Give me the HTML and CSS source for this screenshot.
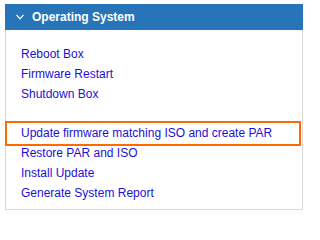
FILE: index.html
```html
<!DOCTYPE html>
<html>
<head>
<meta charset="utf-8">
<link rel="stylesheet" href="styles.css">
</head>
<body>
<div class="panel">
  <div class="panel-header">
    <svg class="chevron" width="8" height="6" viewBox="0 0 8 6"><polyline points="0.5,0.8 4,4.8 7.5,0.8" fill="none" stroke="#fff" stroke-width="1.2"/></svg>
    <span class="title">Operating System</span>
  </div>
  <div class="panel-body">
    <ul class="group">
      <li><a class="link" href="#">Reboot Box</a></li>
      <li><a class="link" href="#">Firmware Restart</a></li>
      <li><a class="link" href="#">Shutdown Box</a></li>
    </ul>
    <ul class="group group-second">
      <li class="selected"><a class="link" href="#">Update firmware matching ISO and create PAR</a></li>
      <li><a class="link" href="#">Restore PAR and ISO</a></li>
      <li><a class="link" href="#">Install Update</a></li>
      <li><a class="link" href="#">Generate System Report</a></li>
    </ul>
  </div>
</div>
</body>
</html>
```
FILE: styles.css
```css
html, body {
  margin: 0;
  padding: 0;
  background: #fff;
}
body {
  font-family: "Liberation Sans", Arial, sans-serif;
  font-size: 12px;
}
.panel {
  margin: 4px 0 0 5px;
  width: 298px;
}
.panel-header {
  height: 26px;
  background: #2874b8;
  color: #fff;
  display: flex;
  align-items: center;
  padding-left: 11px;
  gap: 8px;
}
.chevron {
  display: block;
}
.title {
  font-weight: bold;
  line-height: 26px;
}
.panel-body {
  border: 1px solid #d8d8d8;
  border-top: none;
  padding: 14px 0 6px 0;
}
.group {
  list-style: none;
  margin: 0;
  padding: 0;
}
.group-second {
  margin-top: 19px;
}
.group li {
  line-height: 20px;
  height: 20px;
  padding-left: 14px;
  margin: 0 3px 0 1px;
  position: relative;
}
.link {
  color: #1c10d8;
  text-decoration: none;
}
.selected::after {
  content: "";
  position: absolute;
  top: -2px;
  bottom: -3px;
  left: -2px;
  right: -2px;
  border: 2px solid #ff6a00;
  pointer-events: none;
}
```
